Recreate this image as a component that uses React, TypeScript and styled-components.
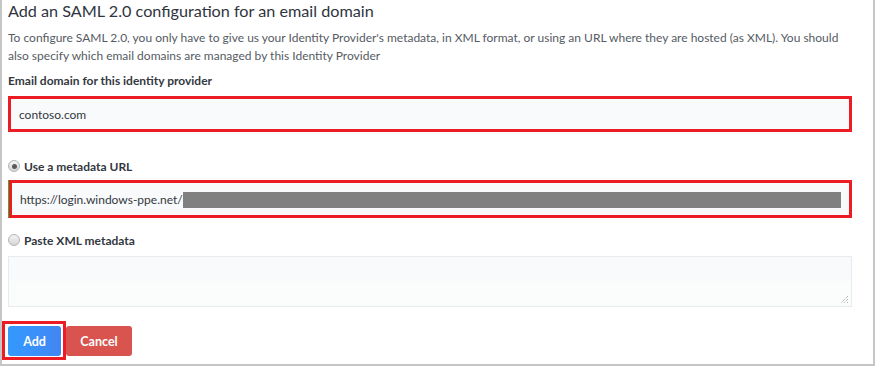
import React from "react";
import styled, { createGlobalStyle } from "styled-components";

const Global = createGlobalStyle`
  html, body { margin: 0; padding: 0; background: #ffffff; }
  body { font-family: Lato, "Open Sans", sans-serif; }
  * { box-sizing: border-box; }
`;

const Frame = styled.div`
  width: 875px;
  height: 366px;
  border: 2px solid #c6c6c6;
  border-top: none;
  padding: 0 21px 0 6px;
  display: flex;
  flex-direction: column;
  background: #fff;
  font-family: Lato, "Open Sans", sans-serif;
`;

const Title = styled.h2`
  margin: 0;
  font-size: 16.2px;
  line-height: 21px;
  font-weight: 400;
  color: #2f3440;
  white-space: nowrap;
`;

const Desc = styled.p`
  margin: 8px 0 0;
  font-size: 12px;
  line-height: 18px;
  color: #555b63;
`;

const FieldLabel = styled.div`
  margin-top: 7px;
  font-size: 12px;
  line-height: 18px;
  font-weight: 700;
  color: #333840;
`;

const Highlight = styled.div<{ $mt: number; $h: number; $focus?: boolean }>`
  margin-top: ${(p) => p.$mt}px;
  height: ${(p) => p.$h}px;
  border: 3px solid #ec1c24;
  background: #f9fafc;
  display: flex;
  align-items: center;
  padding-left: 8px;
  ${(p) =>
    p.$focus
      ? `margin-left: 1px; box-shadow: -1px 0 0 #3fae2a;`
      : ``}
`;

const InputText = styled.span`
  font-size: 12px;
  color: #333840;
  white-space: nowrap;
`;

const Redacted = styled.span`
  display: inline-block;
  flex: 1;
  height: 16px;
  margin-right: 8px;
  margin-top: 1px;
  background: #808080;
`;

const RadioRow = styled.label<{ $mt: number }>`
  margin-top: ${(p) => p.$mt}px;
  display: flex;
  align-items: center;
  gap: 4px;
  height: 18px;
  font-size: 12px;
  font-weight: 700;
  color: #333840;
`;

const RadioDot = styled.span<{ $checked?: boolean }>`
  width: 12px;
  height: 12px;
  border-radius: 50%;
  border: 1px solid #b4b4b4;
  background: linear-gradient(#f4f4f4, #d6d6d6);
  display: flex;
  align-items: center;
  justify-content: center;
  &::after {
    content: "";
    width: 5px;
    height: 5px;
    border-radius: 50%;
    background: ${(p) => (p.$checked ? "#5a5a5a" : "transparent")};
  }
`;

const TextArea = styled.div`
  margin-top: 7px;
  height: 51px;
  border: 1px solid #e6ebf0;
  background: linear-gradient(#f9fafc 0 50%, #fbfcfc 50% 100%);
  position: relative;
`;

const Grip = styled.svg`
  position: absolute;
  right: 2px;
  bottom: 2px;
`;

const ButtonRow = styled.div`
  margin-top: 14px;
  margin-left: -6px;
  display: flex;
  align-items: flex-start;
`;

const AddOutline = styled.div`
  border: 3px solid #ec1c24;
  padding: 2px 2px 1px 3px;
`;

const Button = styled.button<{ $variant: "primary" | "danger" }>`
  height: 30px;
  border: none;
  border-radius: 3px;
  font-family: Lato, "Open Sans", sans-serif;
  font-size: 12.5px;
  font-weight: 700;
  color: #fff;
  padding: 0;
  width: ${(p) => (p.$variant === "primary" ? 53 : 66)}px;
  margin-top: ${(p) => (p.$variant === "primary" ? 0 : 5)}px;
  background: ${(p) =>
    p.$variant === "primary"
      ? "linear-gradient(to right, #3399ff, #4286f3)"
      : "#d9534f"};
`;

export default function App() {
  return (
    <>
      <Global />
      <Frame>
        <Title>Add an SAML 2.0 configuration for an email domain</Title>
        <Desc>
          To configure SAML 2.0, you only have to give us your Identity Provider's metadata, in XML
          format, or using an URL where they are hosted (as XML). You should also specify which
          email domains are managed by this Identity Provider
        </Desc>
        <FieldLabel>Email domain for this identity provider</FieldLabel>
        <Highlight $mt={6} $h={36}>
          <InputText>contoso.com</InputText>
        </Highlight>
        <RadioRow $mt={25}>
          <RadioDot $checked />
          Use a metadata URL
        </RadioRow>
        <Highlight $mt={5} $h={38} $focus>
          <InputText>https://login.windows-ppe.net/</InputText>
          <Redacted />
        </Highlight>
        <RadioRow $mt={13}>
          <RadioDot />
          Paste XML metadata
        </RadioRow>
        <TextArea>
          <Grip width="9" height="9" viewBox="0 0 9 9">
            <path d="M8 1L1 8M8 4L4 8M8 7L7 8" stroke="#9a9a9a" strokeWidth="1" strokeDasharray="1 1" />
          </Grip>
        </TextArea>
        <ButtonRow>
          <AddOutline>
            <Button $variant="primary">Add</Button>
          </AddOutline>
          <Button $variant="danger">Cancel</Button>
        </ButtonRow>
      </Frame>
    </>
  );
}
